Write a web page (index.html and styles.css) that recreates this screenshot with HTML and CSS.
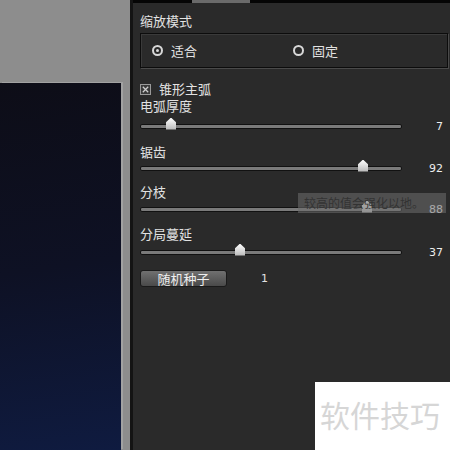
FILE: index.html
```html
<!DOCTYPE html>
<html>
<head>
<meta charset="utf-8">
<link rel="stylesheet" href="styles.css">
</head>
<body>
<div class="app">
  <div class="workspace">
    <div class="canvas"></div>
  </div>
  <div class="divider"></div>
  <div class="panel">
    <div class="topbar"><div class="tab"></div></div>
    <div class="title">缩放模式</div>
    <div class="group">
      <div class="radio-item r1"><span class="radio on"></span>适合</div>
      <div class="radio-item r2"><span class="radio"></span>固定</div>
    </div>
    <div class="check-row"><span class="check"><svg width="10" height="10" viewBox="0 0 10 10"><path d="M2 2L8 8M8 2L2 8" stroke="#cfcfcf" stroke-width="1.4"/></svg></span>锥形主弧</div>
    <div class="label l1">电弧厚度</div>
    <div class="slider s1"><div class="track"><span class="thumb" style="left:25px"></span></div><span class="val">7</span></div>
    <div class="label l2">锯齿</div>
    <div class="slider s2"><div class="track"><span class="thumb" style="left:217px"></span></div><span class="val">92</span></div>
    <div class="label l3">分枝</div>
    <div class="slider s3"><div class="track"><span class="thumb" style="left:221px"></span></div><span class="val">88</span></div>
    <div class="label l4">分局蔓延</div>
    <div class="slider s4"><div class="track"><span class="thumb" style="left:94px"></span></div><span class="val">37</span></div>
    <div class="btn-row"><div class="btn">随机种子</div><span class="seed">1</span></div>
    <div class="tooltip">较高的值会强化以地。</div>
  </div>
  <div class="watermark">软件技巧</div>
</div>
</body>
</html>
```
FILE: styles.css
```css
* { box-sizing: border-box; }
html, body { margin: 0; padding: 0; }
body {
  width: 450px; height: 450px; overflow: hidden;
  font-family: "Noto Sans CJK SC", "Liberation Sans", sans-serif;
  font-size: 12px; color: #e2e2e2;
}
.app { position: relative; display: flex; width: 450px; height: 450px; }
.workspace {
  width: 130px; height: 450px; background: #8d8d8d;
  padding-top: 83px; padding-right: 9px;
}
.canvas {
  width: 121px; height: 367px;
  background: linear-gradient(172deg, #0d0d17 0%, #0e1124 50%, #0f1b40 100%);
  box-shadow: 2px -1px 0 #a2a2a2;
}
.divider { width: 3px; height: 450px; background: #141414; }
.panel {
  position: relative; flex: 1; height: 450px; background: #2a2a2a;
  padding: 0 2px 0 7px; display: flex; flex-direction: column;
}
.topbar { height: 3px; margin: 0 -2px 0 -7px; background: #050505; position: relative; }
.tab { position: absolute; left: 59px; top: 0; width: 58px; height: 3px; background: #6a6a6a; }
.title { height: 16px; line-height: 16px; margin-top: 10px; font-size: 13px; }
.group {
  position: relative; height: 35px; margin-top: 4px;
  border: 1px solid #0c0c0c; box-shadow: 1px 1px 0 #4a4a4a, inset 1px 1px 0 #3a3a3a;
  display: flex; align-items: center;
}
.radio-item { display: flex; align-items: center; gap: 8px; font-size: 13px; }
.r1 { margin-left: 11px; width: 146px; }
.r2 { margin-left: -5px; }
.radio {
  width: 11px; height: 11px; border-radius: 50%; border: 2px solid #d8d8d8;
  display: flex; align-items: center; justify-content: center;
}
.radio.on::after { content: ""; width: 3px; height: 3px; border-radius: 50%; background: #d8d8d8; }
.check-row { height: 14px; line-height: 14px; margin-top: 14px; display: flex; align-items: center; gap: 8px; font-size: 13px; }
.check { width: 11px; height: 11px; border: 1px solid #9a9a9a; background: #3a3a3a; display: flex; }
.check svg { margin: 0; width: 9px; height: 9px; }
.label { height: 14px; line-height: 14px; font-size: 13px; }
.l1 { margin-top: 3px; }
.l2 { margin-top: 12px; }
.l3 { margin-top: 10px; }
.l4 { margin-top: 11px; }
.slider { height: 14px; display: flex; align-items: center; }
.s1 { margin-top: 6px; }
.s2 { margin-top: 2px; }
.s3 { margin-top: 3px; }
.s4 { margin-top: 4px; }
.track {
  position: relative; width: 262px; height: 5px; background: #7a7a7a;
  border: 1px solid #111; border-radius: 2px;
}
.thumb {
  position: absolute; top: -7px; width: 10px; height: 12px;
  background: linear-gradient(#ffffff, #b8b8b8);
  clip-path: polygon(0 40%, 50% 0, 100% 40%, 100% 100%, 0 100%);
}
.val { flex: 1; text-align: right; padding-right: 5px; font-family: "DejaVu Sans", sans-serif; font-size: 11px; color: #eee; }
.btn-row { margin-top: 11px; display: flex; align-items: center; }
.btn {
  width: 87px; height: 17px; line-height: 15px; text-align: center;
  border: 1px solid #1a1a1a; border-radius: 3px; font-size: 13px; color: #eee;
  background: linear-gradient(#707070, #4a4a4a);
}
.seed { margin-left: 34px; font-family: "DejaVu Sans", sans-serif; font-size: 11px; }
.tooltip {
  position: absolute; left: 165px; top: 193px; width: 148px; height: 20px;
  background: rgba(110, 110, 110, 0.55); color: #333; font-size: 12px;
  line-height: 20px; padding-left: 6px; white-space: nowrap; overflow: hidden;
}
.watermark {
  position: absolute; left: 315px; top: 382px; width: 135px; height: 68px;
  background: #fff; color: #d6d6d6; font-size: 30px; line-height: 30px;
  padding: 17px 0 0 5px;
}
```
